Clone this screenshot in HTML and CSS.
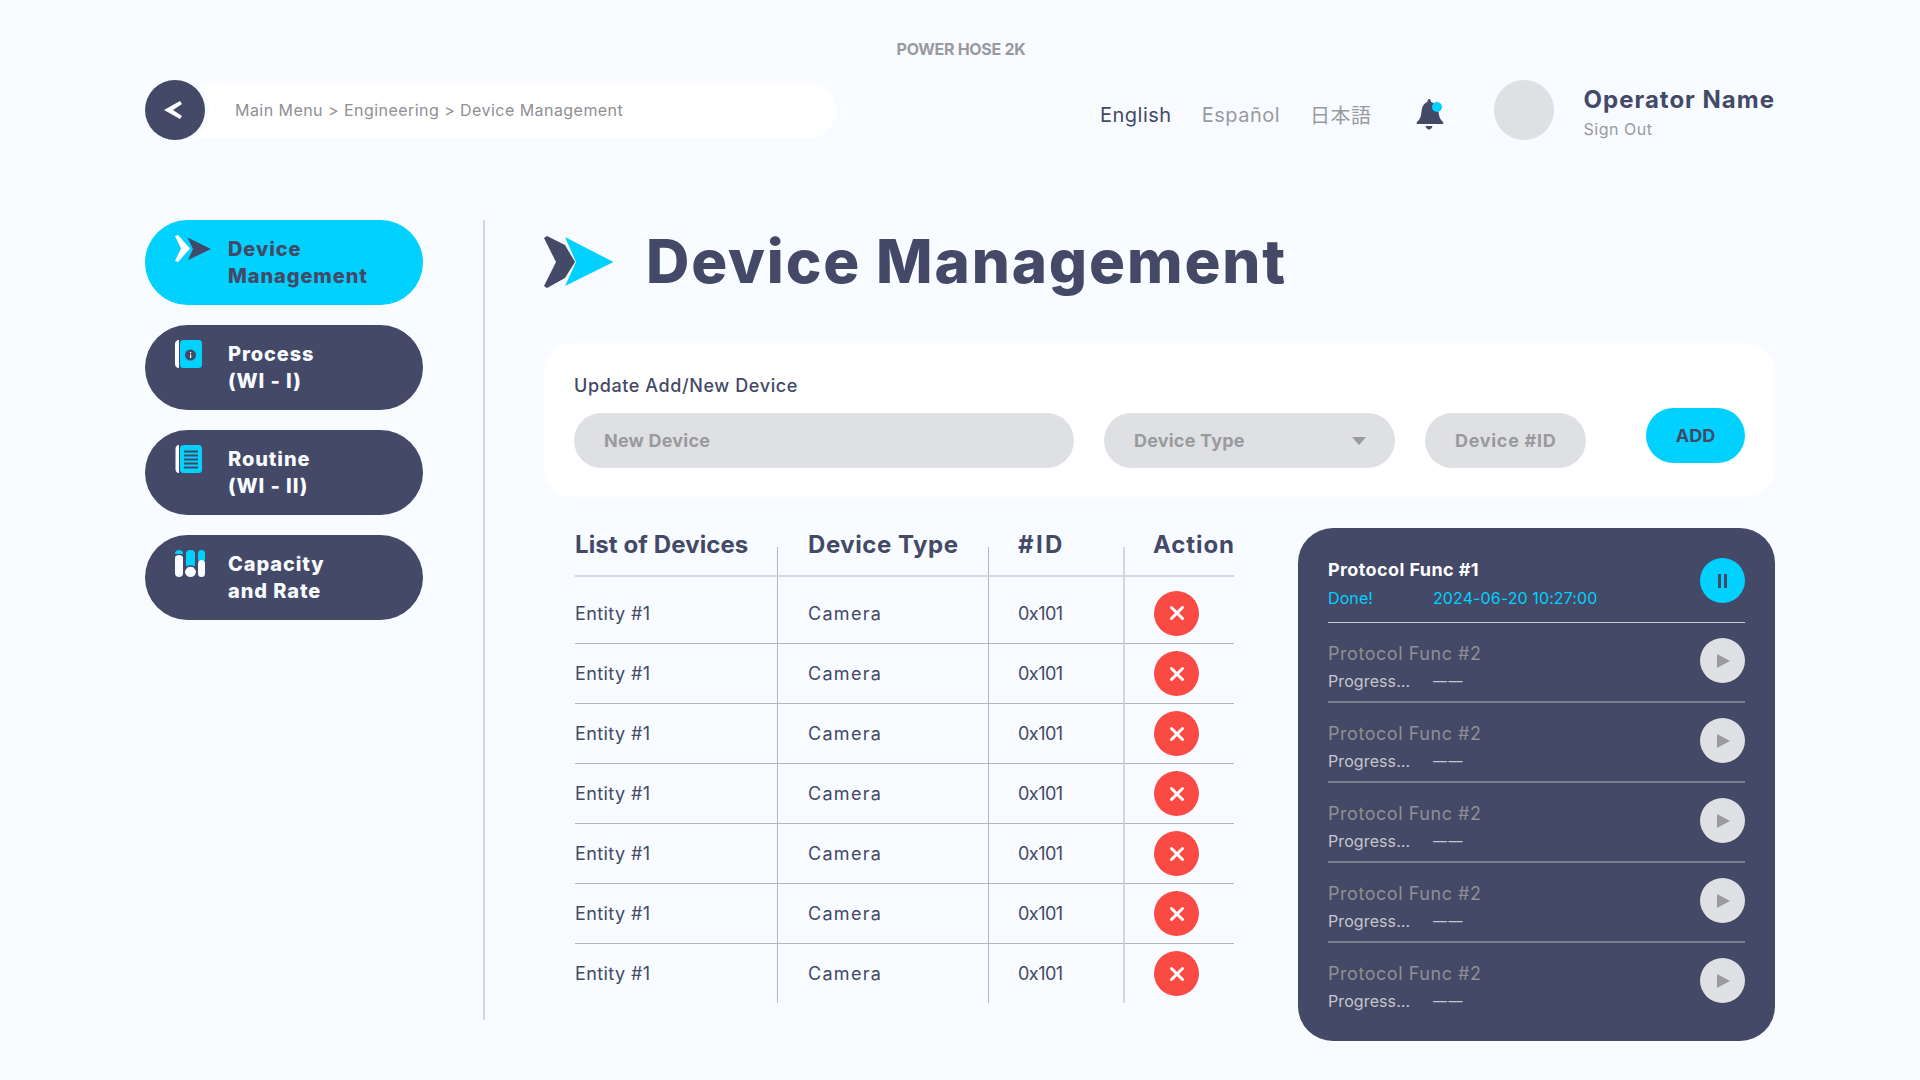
FILE: index.html
```html
<!DOCTYPE html>
<html lang="en">
<head>
<meta charset="UTF-8" />
<meta name="viewport" content="width=device-width, initial-scale=1" />
<title>Power Hose 2K - Device Management</title>
<link rel="stylesheet" href="styles.css">
</head>
<body>

<svg class="defs" aria-hidden="true">
  <symbol id="ico-x" viewBox="0 0 16 16"><path d="M2.5 2.5l11 11M13.5 2.5l-11 11" fill="none" stroke="#fff" stroke-width="3" stroke-linecap="round"/></symbol>
  <symbol id="ico-play" viewBox="0 0 16 16"><path d="M2 1l13 7-13 7z" fill="#9a9a9e"/></symbol>
</svg>

<div class="app-title">POWER HOSE 2K</div>

<div class="topbar">
  <div class="crumb-wrap">
    <div class="crumb-bar">Main Menu &gt; Engineering &gt; Device Management</div>
    <button class="back-btn">
      <svg width="18" height="18" viewBox="0 0 18 18"><path d="M16 0l2 3-9 6 9 6-2 3L0 9z" fill="#fff"/></svg>
    </button>
  </div>
  <div class="top-right">
    <div class="langs">
      <span class="lang active">English</span>
      <span class="lang">Español</span>
      <span class="lang lang-jp">日本語</span>
    </div>
    <svg class="bell" width="28" height="31" viewBox="0 0 28 31">
      <path d="M13 0c1.500 0 2 1.500 2 3 4 1 7 4.500 7.500 9.500.5 5 1.500 8 4.500 10.500.8.800.5 2-.8 2H1.800C.5 25 .2 23.800 1 23c3-2.500 4-5.500 4.500-10.500C6 7.500 8 4 11.500 3c0-1.500.5-3 1.500-3z" fill="#434966"/>
      <path d="M9.500 27h7c-.5 2.200-2 3.500-3.500 3.500S10 29.200 9.500 27z" fill="#434966"/>
      <circle cx="21" cy="8" r="5" fill="#00d1ff"/>
    </svg>
    <div class="avatar"></div>
    <div class="user">
      <div class="user-name">Operator Name</div>
      <div class="user-sign">Sign Out</div>
    </div>
  </div>
</div>

<div class="main">
  <div class="sidebar">
    <div class="menu-item active">
      <svg class="menu-icon" width="36" height="27" viewBox="0 0 36 27">
        <path d="M0 1l3-1 12 13.500L3 27l-3-1 6-12.500z" fill="#fff"/>
        <path d="M12.500 2.500L36 14 13 25l5-11z" fill="#434966"/>
      </svg>
      <span>Device<br>Management</span>
    </div>
    <div class="menu-item">
      <svg class="menu-icon" width="36" height="28" viewBox="0 0 36 28">
        <path d="M4 0C1.500 0 0 2 0 4v20c0 2 1.500 4 4 4z" fill="#fff"/>
        <rect x="5" width="22" height="28" rx="3.500" fill="#00d1ff"/>
        <circle cx="15.500" cy="15" r="5.500" fill="#434966"/>
        <rect x="15" y="14.500" width="1.200" height="3.500" fill="#fff"/>
        <rect x="15" y="12" width="1.200" height="1.400" fill="#fff"/>
      </svg>
      <span>Process<br>(WI - I)</span>
    </div>
    <div class="menu-item">
      <svg class="menu-icon" width="36" height="28" viewBox="0 0 36 28">
        <path d="M4 0C1.500 0 0.500 2 0.500 4v20c0 2 1 4 3.500 4z" fill="#fff"/>
        <rect x="5" width="22" height="28" rx="3.500" fill="#00d1ff"/>
        <path d="M9 6.500h14M9 10.500h14M9 14.500h14M9 18.500h14M9 22.500h14" stroke="#434966" stroke-width="2"/>
      </svg>
      <span>Routine<br>(WI - II)</span>
    </div>
    <div class="menu-item">
      <svg class="menu-icon" width="36" height="28" viewBox="0 0 36 28">
        <rect width="8" height="10" rx="4" fill="#00d1ff"/>
        <rect x="11" width="9" height="18" rx="4" fill="#00d1ff"/>
        <rect x="23" width="7" height="12" rx="3.500" fill="#00d1ff"/>
        <rect y="4" width="8" height="2" fill="#434966"/>
        <rect y="5" width="8" height="22" rx="4" fill="#f8fbff"/>
        <circle cx="15.500" cy="21.500" r="5.500" fill="#f8fbff"/>
        <path d="M10 20c1-3 3-4 5.500-4s4.500 1 5.500 4" fill="none" stroke="#434966" stroke-width="1.500"/>
        <rect x="23" y="10" width="7" height="17" rx="3.500" fill="#f8fbff"/>
      </svg>
      <span>Capacity<br>and Rate</span>
    </div>
  </div>

  <div class="content">
    <div class="page-head">
      <svg width="70" height="52" viewBox="0 0 70 52">
        <path d="M0 2l3-2 18 9 10 17-10 16-18 10-3-2 12-24z" fill="#434966"/>
        <path d="M21 1l48.500 25L21 50l11-24z" fill="#00d1ff"/>
      </svg>
      <h1>Device Management</h1>
    </div>

    <div class="add-card">
      <div class="add-label">Update Add/New Device</div>
      <div class="add-row">
        <div class="field field-name">New Device</div>
        <div class="field field-type">Device Type<i class="caret"></i></div>
        <div class="field field-id">Device #ID</div>
        <button class="btn-add">ADD</button>
      </div>
    </div>

    <div class="lower">
      <table class="devices">
        <thead>
          <tr><th>List of Devices</th><th>Device Type</th><th>#ID</th><th>Action</th></tr>
        </thead>
        <tbody>
          <tr><td>Entity #1</td><td>Camera</td><td>0x101</td><td><button class="btn-del"><svg width="16" height="16"><use href="#ico-x"/></svg></button></td></tr>
          <tr><td>Entity #1</td><td>Camera</td><td>0x101</td><td><button class="btn-del"><svg width="16" height="16"><use href="#ico-x"/></svg></button></td></tr>
          <tr><td>Entity #1</td><td>Camera</td><td>0x101</td><td><button class="btn-del"><svg width="16" height="16"><use href="#ico-x"/></svg></button></td></tr>
          <tr><td>Entity #1</td><td>Camera</td><td>0x101</td><td><button class="btn-del"><svg width="16" height="16"><use href="#ico-x"/></svg></button></td></tr>
          <tr><td>Entity #1</td><td>Camera</td><td>0x101</td><td><button class="btn-del"><svg width="16" height="16"><use href="#ico-x"/></svg></button></td></tr>
          <tr><td>Entity #1</td><td>Camera</td><td>0x101</td><td><button class="btn-del"><svg width="16" height="16"><use href="#ico-x"/></svg></button></td></tr>
          <tr><td>Entity #1</td><td>Camera</td><td>0x101</td><td><button class="btn-del"><svg width="16" height="16"><use href="#ico-x"/></svg></button></td></tr>
        </tbody>
      </table>

      <div class="protocols">
        <div class="proto done">
          <div class="proto-text">
            <div class="proto-name">Protocol Func #1</div>
            <div class="proto-sub"><span class="proto-state">Done!</span><span>2024-06-20 10:27:00</span></div>
          </div>
          <button class="proto-btn pause"><i></i><i></i></button>
        </div>
        <div class="proto">
          <div class="proto-text">
            <div class="proto-name">Protocol Func #2</div>
            <div class="proto-sub"><span class="proto-state">Progress...</span><span class="proto-dash">——</span></div>
          </div>
          <button class="proto-btn"><svg width="16" height="16"><use href="#ico-play"/></svg></button>
        </div>
        <div class="proto">
          <div class="proto-text">
            <div class="proto-name">Protocol Func #2</div>
            <div class="proto-sub"><span class="proto-state">Progress...</span><span class="proto-dash">——</span></div>
          </div>
          <button class="proto-btn"><svg width="16" height="16"><use href="#ico-play"/></svg></button>
        </div>
        <div class="proto">
          <div class="proto-text">
            <div class="proto-name">Protocol Func #2</div>
            <div class="proto-sub"><span class="proto-state">Progress...</span><span class="proto-dash">——</span></div>
          </div>
          <button class="proto-btn"><svg width="16" height="16"><use href="#ico-play"/></svg></button>
        </div>
        <div class="proto">
          <div class="proto-text">
            <div class="proto-name">Protocol Func #2</div>
            <div class="proto-sub"><span class="proto-state">Progress...</span><span class="proto-dash">——</span></div>
          </div>
          <button class="proto-btn"><svg width="16" height="16"><use href="#ico-play"/></svg></button>
        </div>
        <div class="proto">
          <div class="proto-text">
            <div class="proto-name">Protocol Func #2</div>
            <div class="proto-sub"><span class="proto-state">Progress...</span><span class="proto-dash">——</span></div>
          </div>
          <button class="proto-btn"><svg width="16" height="16"><use href="#ico-play"/></svg></button>
        </div>
      </div>
    </div>
  </div>
</div>

</body>
</html>
```

FILE: styles.css
```css
* {
  box-sizing: border-box;
}
body {
  margin: 0;
  width: 1920px;
  height: 1080px;
  padding: 0 145px;
  overflow: hidden;
  font-family: Inter, "Noto Sans CJK JP", sans-serif;
  background-color: #f8fbff;
  color: #434966;
}
button {
  border: none;
  padding: 0;
  font-family: inherit;
}
.defs {
  display: none;
}

/* Top */
.app-title {
  height: 80px;
  padding-top: 39px;
  padding-left: 2px;
  text-align: center;
  font-size: 16px;
  line-height: 20px;
  font-weight: 700;
  letter-spacing: -0.3px;
  color: #9a9a9e;
}
.topbar {
  display: flex;
  justify-content: space-between;
  height: 60px;
}
.crumb-wrap {
  position: relative;
  width: 691px;
  display: flex;
  align-items: center;
}
.crumb-bar {
  width: 100%;
  height: 55px;
  padding-left: 90px;
  line-height: 55px;
  font-size: 16px;
  letter-spacing: 0.45px;
  color: #8f8f94;
  background: #fff;
  border-radius: 28px;
}
.back-btn {
  position: absolute;
  left: 0;
  top: 0;
  width: 60px;
  height: 60px;
  padding-right: 4px;
  display: flex;
  align-items: center;
  justify-content: center;
  border-radius: 50%;
  background: #434966;
  box-shadow: 0 0 0 4px #f8fbff;
}
.top-right {
  display: flex;
  align-items: center;
}
.langs {
  display: flex;
  gap: 30px;
  font-size: 20px;
  margin-top: 12px;
  margin-right: 44px;
}
.lang {
  color: #9a9a9e;
  letter-spacing: 0.5px;
}
.lang.active {
  color: #434966;
}
.lang-jp {
  margin-top: -3px;
}
.bell {
  margin-right: 50px;
  margin-top: 8px;
}
.avatar {
  width: 60px;
  height: 60px;
  border-radius: 50%;
  background: #dee0e4;
  margin-right: 30px;
}
.user {
  padding-top: 4px;
}
.user-name {
  font-size: 24px;
  line-height: 30px;
  font-weight: 700;
  letter-spacing: 1px;
}
.user-sign {
  margin-top: 4px;
  font-size: 16px;
  line-height: 20px;
  letter-spacing: 0.5px;
  color: #9a9a9e;
}

/* Sidebar */
.main {
  display: flex;
  margin-top: 80px;
}
.sidebar {
  width: 340px;
  height: 800px;
  padding-right: 60px;
  border-right: 2px solid #d3d6db;
  display: flex;
  flex-direction: column;
  gap: 20px;
  flex-shrink: 0;
}
.menu-item {
  position: relative;
  height: 85px;
  padding-left: 83px;
  display: flex;
  align-items: center;
  font-size: 20px;
  line-height: 27px;
  font-weight: 800;
  letter-spacing: 0.9px;
  color: #f8fbff;
  background: #434966;
  border-radius: 43px;
}
.menu-item.active {
  color: #434966;
  background: #00d1ff;
}
.menu-icon {
  position: absolute;
  left: 30px;
  top: 15px;
}

/* Content */
.content {
  margin-left: 59px;
  width: 1231px;
}
.page-head {
  height: 123px;
  padding-top: 16px;
  display: flex;
  align-items: flex-start;
  gap: 32px;
}
.page-head h1 {
  margin: -10px 0 0;
  font-size: 60px;
  line-height: 70px;
  font-weight: 800;
  letter-spacing: 1.85px;
}
.add-card {
  height: 154px;
  padding: 31px 30px 0;
  background: #fff;
  border-radius: 30px;
}
.add-label {
  font-size: 18px;
  line-height: 24px;
  letter-spacing: 0.6px;
  font-weight: 500;
}
.add-row {
  display: flex;
  align-items: flex-start;
  margin-top: 15px;
}
.field {
  position: relative;
  height: 55px;
  padding-left: 30px;
  line-height: 55px;
  font-size: 18px;
  font-weight: 700;
  letter-spacing: 0.2px;
  color: #9a9a9e;
  background: #dee0e4;
  border-radius: 28px;
}
.field-name {
  width: 500px;
}
.field-type {
  width: 291px;
  margin-left: 30px;
}
.field-id {
  width: 161px;
  margin-left: 30px;
  letter-spacing: 0.7px;
}
.caret {
  position: absolute;
  right: 29px;
  top: 24px;
  border-left: 7px solid transparent;
  border-right: 7px solid transparent;
  border-top: 8px solid #9a9a9e;
}
.btn-add {
  width: 99px;
  height: 55px;
  margin: -5px 0 0 60px;
  font-size: 18px;
  font-weight: 700;
  color: #434966;
  background: #00d1ff;
  border-radius: 28px;
}

/* Table */
.lower {
  display: flex;
  justify-content: space-between;
  margin-top: 31px;
  padding-left: 31px;
}
.devices {
  width: 659px;
  height: 474px;
  table-layout: fixed;
  border-collapse: separate;
  border-spacing: 0;
}
.devices th {
  position: relative;
  height: 48px;
  padding: 0 0 13px;
  text-align: left;
  font-size: 24px;
  line-height: 34px;
  font-weight: 700;
  letter-spacing: 0.1px;
  border-bottom: 2px solid #d5d7db;
}
.devices th::after {
  content: "";
  position: absolute;
  right: 0;
  top: 19px;
  bottom: 0;
  width: 1px;
  background: #b5b7bd;
}
.devices th:last-child::after {
  display: none;
}
.devices th:nth-child(1) { width: 203px; }
.devices th:nth-child(2) { width: 211px; }
.devices th:nth-child(3) { width: 136px; }
.devices th:nth-child(3)::after {
  width: 2px;
  background: #d5d7db;
}
.devices th:nth-child(n+2),
.devices td:nth-child(n+2) {
  padding-left: 30px;
}
.devices th:nth-child(2) {
  letter-spacing: 0.55px;
}
.devices th:nth-child(3),
.devices td:nth-child(3) {
  padding-left: 29px;
}
.devices th:nth-child(3) {
  letter-spacing: 2.4px;
}
.devices th:nth-child(4) {
  padding-left: 28px;
  letter-spacing: 0.9px;
}
.devices td {
  height: 60px;
  padding: 0;
  font-size: 18px;
  letter-spacing: 0.4px;
  border-bottom: 1.5px solid #b5b7bd;
  border-right: 1px solid #b5b7bd;
}
.devices tbody tr:first-child td {
  height: 67px;
  padding-top: 6px;
}
.devices tbody tr:last-child td {
  height: 59px;
  border-bottom: none;
}
.devices td:nth-child(2) {
  letter-spacing: 1.3px;
}
.devices td:nth-child(3) {
  letter-spacing: -0.5px;
  border-right: 2px solid #d5d7db;
}
.devices td:last-child {
  border-right: none;
  padding-left: 29px;
}
.btn-del {
  width: 45px;
  height: 45px;
  display: flex;
  align-items: center;
  justify-content: center;
  border-radius: 50%;
  background: #fa4a44;
}

/* Protocols */
.protocols {
  width: 477px;
  height: 513px;
  padding: 0 30px;
  background: #434966;
  border-radius: 35px;
}
.proto {
  height: 80px;
  display: flex;
  justify-content: space-between;
  align-items: flex-start;
  border-bottom: 2px solid #7a7e90;
}
.proto.done {
  height: 95px;
  border-bottom: 1px solid #c9cbd2;
}
.proto:last-child {
  border-bottom: none;
}
.proto-text {
  margin-top: 19px;
}
.done .proto-text {
  margin-top: 30px;
}
.proto-name {
  font-size: 18px;
  line-height: 24px;
  letter-spacing: 0.55px;
  color: #8f8f94;
}
.done .proto-name {
  letter-spacing: 0.4px;
  font-weight: 700;
  color: #fff;
}
.proto-sub {
  display: flex;
  margin-top: 5px;
  font-size: 16px;
  line-height: 20px;
  color: #c6c7cc;
  letter-spacing: 0.1px;
}
.done .proto-sub {
  margin-top: 6px;
  color: #00d1ff;
}
.proto-state {
  width: 105px;
}
.proto-dash {
  font-size: 14px;
  letter-spacing: 1.5px;
}
.proto-btn {
  width: 45px;
  height: 45px;
  margin-top: 15px;
  display: flex;
  align-items: center;
  justify-content: center;
  gap: 3px;
  border-radius: 50%;
  background: #dee0e4;
}
.proto-btn.pause {
  margin-top: 30px;
  background: #00d1ff;
}
.proto-btn.pause i {
  width: 3px;
  height: 14px;
  background: #434966;
}
```
